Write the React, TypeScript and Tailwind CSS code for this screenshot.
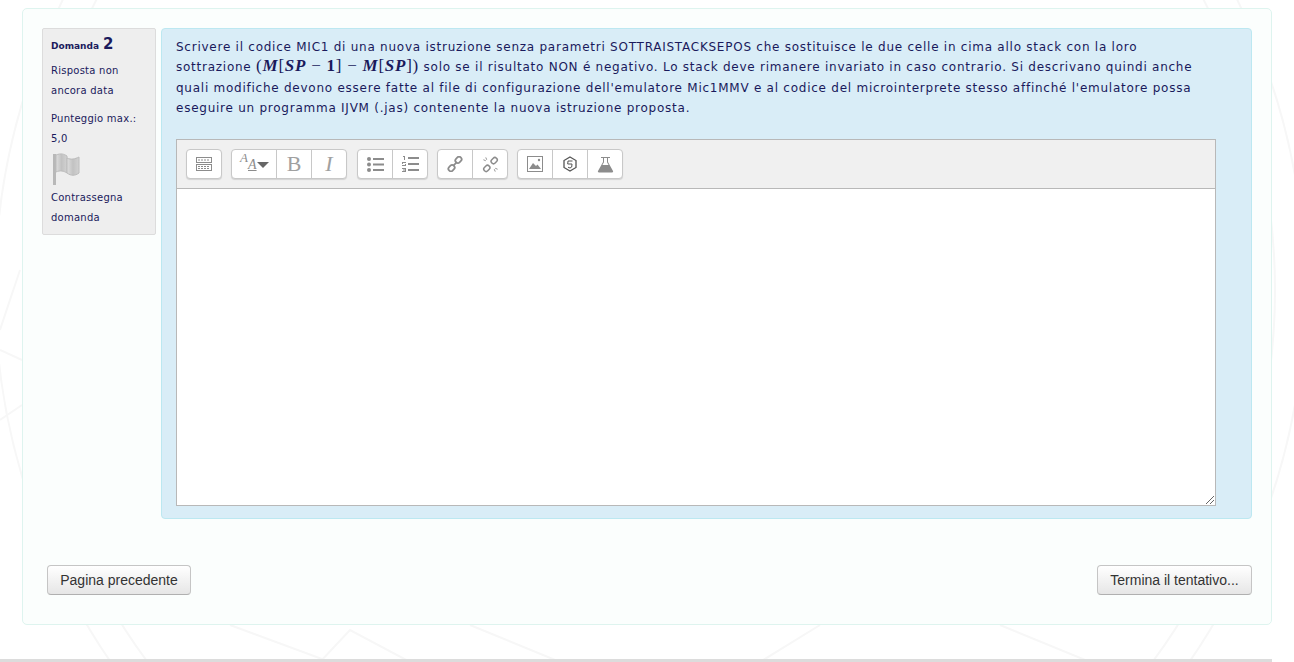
import React from 'react';

function Tool({ children, last, w = 'w-[35px]' }: { children: React.ReactNode; last?: boolean; w?: string }) {
  return (
    <div className={`${w} h-full flex items-center justify-center ${last ? '' : 'border-r border-[#c8c8c8]'}`}>
      {children}
    </div>
  );
}

function Group({ children }: { children: React.ReactNode }) {
  return (
    <div className="flex h-[30px] bg-white border border-[#c8c8c8] rounded-[4px] shadow-[0_1px_1px_rgba(0,0,0,0.12)]">
      {children}
    </div>
  );
}

const c = '#8c8c8c';

export default function App() {
  return (
    <div className="relative w-[1294px] h-[662px] bg-white overflow-hidden font-['DejaVu_Sans',sans-serif]">
      {/* watermark */}
      <svg className="absolute inset-0" width="1294" height="662" fill="none" stroke="#f7f7f7" strokeWidth="2">
        <circle cx="650" cy="290" r="655" />
        <circle cx="650" cy="290" r="625" />
        <path d="M0 330 L20 270 M0 420 L22 405 M0 350 L22 360 M230 625 L330 662 M320 662 L350 630 L410 662 M470 625 L560 662 M820 625 L760 662 M1000 625 L1090 662" />
      </svg>

      <div className="relative w-[1250px] ml-[22px] mt-[8px] h-[617px] bg-[#fbfefd] border border-[#def4ef] rounded-[5px] pt-[19px] pl-[19px] pr-[19px]">
        <div className="flex gap-[5px]">
          {/* question info */}
          <div className="w-[114px] h-[207px] shrink-0 bg-[#eeeeee] border border-[#dcdcdc] rounded-[2px] pl-[8px] pt-[5px] text-[10px] leading-[20px] text-[#1a1a5c] tracking-[0.25px]">
            <div className="h-[20px] font-bold text-[9px] tracking-normal flex items-baseline">
              Domanda <span className="text-[15px] font-bold ml-[4px]">2</span>
            </div>
            <div className="mt-[7px]">Risposta non<br />ancora data</div>
            <div className="mt-[8px]">Punteggio max.:<br />5,0</div>
            <svg className="mt-[4px]" width="30" height="34" viewBox="0 0 30 34">
              <defs>
                <linearGradient id="flagFill" x1="0" y1="0" x2="1" y2="0">
                  <stop offset="0" stopColor="#dedede" />
                  <stop offset="0.5" stopColor="#c2c2c2" />
                  <stop offset="1" stopColor="#d2d2d2" />
                </linearGradient>
              </defs>
              <rect x="2" y="1" width="3" height="31" fill="#b8b8b8" />
              <path d="M5 2 C10 0 13 1 16 3 L16 20 C13 18 9 17 5 19 Z" fill="url(#flagFill)" stroke="#bcbcbc" />
              <path d="M16 5 C20 7 24 6 28 4 L28 20 C24 23 20 23 16 20 Z" fill="url(#flagFill)" stroke="#bcbcbc" />
            </svg>
            <div className="mt-[1px]">Contrassegna<br />domanda</div>
          </div>

          {/* question text */}
          <div className="w-[1091px] h-[491px] bg-[#d9edf7] border border-[#bce8f1] rounded-[4px] pt-[8px] pl-[14px]">
            <p className="text-[12px] leading-[20.33px] text-[#1a1a5c] tracking-[0.75px] whitespace-nowrap">
              Scrivere il codice MIC1 di una nuova istruzione senza parametri SOTTRAISTACKSEPOS che sostituisce le due celle in cima allo stack con la loro<br />
              sottrazione <span className="font-['Liberation_Serif',serif] text-[17px] leading-none font-bold"><span className="font-normal">(</span><i>M</i><span className="font-normal">[</span><i>SP</i> <span className="font-normal">−</span> 1<span className="font-normal">]</span> <span className="font-normal">−</span> <i>M</i><span className="font-normal">[</span><i>SP</i><span className="font-normal">])</span></span> solo se il risultato NON é negativo. Lo stack deve rimanere invariato in caso contrario. Si descrivano quindi anche<br />
              quali modifiche devono essere fatte al file di configurazione dell'emulatore Mic1MMV e al codice del microinterprete stesso affinché l'emulatore possa<br />
              eseguire un programma IJVM (.jas) contenente la nuova istruzione proposta.
            </p>

            {/* editor */}
            <div className="mt-[21px] w-[1040px] h-[367px] border border-[#b8b8b8] bg-white flex flex-col relative">
              <div className="h-[49px] shrink-0 bg-[#f0f0f0] border-b border-[#b8b8b8] flex items-center pl-[9px] gap-[9px]">
                <Group>
                  <Tool last w="w-[34px]">
                    <svg width="16" height="16" viewBox="0 0 16 16" fill="none" stroke={c}>
                      <rect x="0.5" y="1.5" width="15" height="5" />
                      <rect x="0.5" y="8.5" width="15" height="6" />
                      <path d="M2 4h12M2 10.5h12M2 12.5h12" strokeDasharray="2 1" />
                    </svg>
                  </Tool>
                </Group>
                <Group>
                  <Tool w="w-[45px]">
                    <span className="relative w-[28px] h-[20px] font-['Liberation_Serif',serif] italic text-[#8c8c8c]">
                      <span className="absolute left-0 top-[-3px] text-[13px] leading-[14px]">A</span>
                      <span className="absolute left-[8px] top-[3px] text-[14px] leading-[15px] underline">A</span>
                      <span className="absolute right-[-1px] top-[8px] w-0 h-0 border-l-[6px] border-r-[6px] border-t-[6px] border-l-transparent border-r-transparent border-t-[#666]" />
                    </span>
                  </Tool>
                  <Tool>
                    <span className="font-['Liberation_Serif',serif] text-[22px] leading-none text-[#a0a0a0]">B</span>
                  </Tool>
                  <Tool last w="w-[34px]">
                    <span className="font-['Liberation_Serif',serif] italic text-[22px] leading-none text-[#a0a0a0]">I</span>
                  </Tool>
                </Group>
                <div className="flex gap-[9px] ml-[1px]">
                  <Group>
                    <Tool>
                      <svg width="17" height="15" viewBox="0 0 17 15" fill={c}>
                        <circle cx="2" cy="2" r="2" /><circle cx="2" cy="7.500" r="2" /><circle cx="2" cy="13" r="2" />
                        <rect x="6" y="1" width="11" height="2" /><rect x="6" y="6.500" width="11" height="2" /><rect x="6" y="12" width="11" height="2" />
                      </svg>
                    </Tool>
                    <Tool last w="w-[34px]">
                      <svg width="17" height="16" viewBox="0 0 17 16" fill={c}>
                        <rect x="6" y="1" width="11" height="2" /><rect x="6" y="7" width="11" height="2" /><rect x="6" y="13" width="11" height="2" />
                        <path d="M1 0h2v4H2V1H1zM0 6h4v1H1v1h3v2H0V9h3V8H0zM0 12h4v4H0v-1h3v-.5H1v-1h2V13H0z" />
                      </svg>
                    </Tool>
                  </Group>
                  <Group>
                    <Tool>
                      <svg width="16" height="16" viewBox="0 0 18 18" fill="none" stroke={c} strokeWidth="2">
                        <rect x="9.200" y="1.600" width="7.400" height="5.600" rx="2.600" transform="rotate(-45 12.900 4.400)" />
                        <rect x="1.400" y="10.800" width="7.400" height="5.600" rx="2.600" transform="rotate(-45 5.100 13.600)" />
                        <path d="M7 11l4-4" />
                      </svg>
                    </Tool>
                    <Tool last w="w-[34px]">
                      <svg width="17" height="17" viewBox="0 0 18 18" fill="none" stroke={c} strokeWidth="1.600">
                        <rect x="9.400" y="2.400" width="7" height="5" rx="2.400" transform="rotate(-45 12.900 4.900)" />
                        <rect x="1.600" y="10.600" width="7" height="5" rx="2.400" transform="rotate(-45 5.100 13.100)" />
                        <path d="M4 1.500l1 2.500M1.500 4l2.500 1M14 16.500l-1-2.500M16.500 14l-2.500-1" strokeWidth="1" />
                      </svg>
                    </Tool>
                  </Group>
                  <Group>
                    <Tool>
                      <svg width="16" height="16" viewBox="0 0 16 16" fill="none">
                        <rect x="0.5" y="0.5" width="15" height="15" stroke={c} />
                        <path d="M2 13l4-6 3 3 1.500-1.500L14 13z" fill={c} />
                        <circle cx="12" cy="4" r="1.200" fill={c} />
                      </svg>
                    </Tool>
                    <Tool>
                      <svg width="16" height="16" viewBox="0 0 16 16" fill="none" stroke="#555" strokeWidth="1.300">
                        <path d="M8 1l6 3.500v7L8 15l-6-3.500v-7z" />
                        <path d="M10.500 5H6l-.3 3h4.300l-.3 3L8 12l-2-.8" strokeWidth="1" />
                      </svg>
                    </Tool>
                    <Tool last w="w-[34px]">
                      <svg width="17" height="17" viewBox="0 0 17 17" fill={c}>
                        <path d="M4 1h9v1h-2v4l5 9a1 1 0 01-1 1.500H2A1 1 0 011 15l5-9V2H4zM7 2v4.300L5.400 9h6.200L10 6.300V2z" fillRule="evenodd" />
                      </svg>
                    </Tool>
                  </Group>
                </div>
              </div>
              <div className="flex-1 relative">
                <svg className="absolute right-[1px] bottom-[1px]" width="9" height="9" viewBox="0 0 9 9" stroke="#666">
                  <path d="M1 9L9 1M5 9l4-4" />
                </svg>
              </div>
            </div>
          </div>
        </div>

        {/* nav buttons */}
        <div className="flex justify-between mt-[46px] pl-[5px] font-['Liberation_Sans',sans-serif]">
          <button className="w-[144px] h-[30px] rounded-[4px] border border-[#c5c5c5] border-b-[#b0b0b0] bg-gradient-to-b from-white to-[#e6e6e6] text-[14px] text-[#333]">
            Pagina precedente
          </button>
          <button className="w-[155px] h-[30px] rounded-[4px] border border-[#c5c5c5] border-b-[#b0b0b0] bg-gradient-to-b from-white to-[#e6e6e6] text-[14px] text-[#333]">
            Termina il tentativo...
          </button>
        </div>
      </div>

      {/* footer rule */}
      <div className="absolute left-0 top-[659px] w-[1272px] h-[3px] bg-[#dcdcdc]" />
    </div>
  );
}
